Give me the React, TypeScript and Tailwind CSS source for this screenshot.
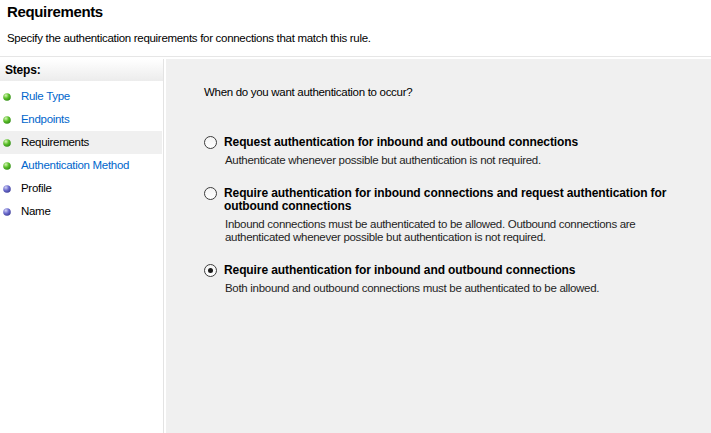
import React from 'react';

type Step = { label: string; done: boolean; link: boolean; current?: boolean };

const steps: Step[] = [
  { label: 'Rule Type', done: true, link: true },
  { label: 'Endpoints', done: true, link: true },
  { label: 'Requirements', done: true, link: false, current: true },
  { label: 'Authentication Method', done: true, link: true },
  { label: 'Profile', done: false, link: false },
  { label: 'Name', done: false, link: false },
];

const options = [
  {
    title: 'Request authentication for inbound and outbound connections',
    desc: 'Authenticate whenever possible but authentication is not required.',
    checked: false,
  },
  {
    title: 'Require authentication for inbound connections and request authentication for outbound connections',
    desc: 'Inbound connections must be authenticated to be allowed. Outbound connections are authenticated whenever possible but authentication is not required.',
    checked: false,
  },
  {
    title: 'Require authentication for inbound and outbound connections',
    desc: 'Both inbound and outbound connections must be authenticated to be allowed.',
    checked: true,
  },
];

const Dot = ({ done }: { done: boolean }) => {
  const id = done ? 'g-done' : 'g-todo';
  return (
    <svg width="8" height="8" viewBox="0 0 8 8" className="shrink-0">
      <defs>
        <radialGradient id={id} cx="0.35" cy="0.3" r="0.75">
          <stop offset="0" stopColor={done ? '#d8f5b8' : '#d4d4f4'} />
          <stop offset="0.5" stopColor={done ? '#5cc02a' : '#6f6fd0'} />
          <stop offset="1" stopColor={done ? '#2f8a14' : '#3c3c96'} />
        </radialGradient>
      </defs>
      <circle cx="4" cy="4" r="3.8" fill={`url(#${id})`} />
    </svg>
  );
};

const Radio = ({ checked }: { checked: boolean }) => (
  <span className="flex h-[13px] w-[13px] shrink-0 items-center justify-center rounded-full border border-[#3c3c3c] bg-gradient-to-b from-[#f4f4f4] to-white">
    {checked && <span className="h-[5px] w-[5px] rounded-full bg-[#1a1a1a]" />}
  </span>
);

const App: React.FC = () => {
  return (
    <div
      className="flex h-[433px] w-[711px] flex-col overflow-hidden bg-white text-[11.5px] tracking-[-0.3px] text-black"
      style={{ fontFamily: '"Liberation Sans", Arial, sans-serif' }}
    >
      <div className="h-[56px] px-[7px] pt-[3px]">
        <div className="text-[15px] font-bold leading-[18px] tracking-[-0.35px]">Requirements</div>
        <div className="mt-[10px] leading-[15px]">
          Specify the authentication requirements for connections that match this rule.
        </div>
      </div>
      <div className="h-px bg-[#e6e6e6]" />
      <div className="flex flex-1 pt-[2px]">
        <div className="w-[164px] border-r border-[#e3e3e3]">
          <div className="flex h-[22px] items-center bg-gradient-to-b from-white to-[#ececec] pl-[5px] text-[12px] font-bold tracking-[-0.2px]">
            Steps:
          </div>
          <div className="flex flex-col pt-[4px]">
            {steps.map((s) => (
              <div
                key={s.label}
                className={`flex h-[23px] items-center gap-[10px] pl-[3px] ${s.current ? 'mr-[1px] bg-[#f0f0f0]' : ''}`}
              >
                <Dot done={s.done} />
                <span className={s.link ? 'text-[#0066cc]' : 'text-black'}>{s.label}</span>
              </div>
            ))}
          </div>
        </div>
        <div className="ml-[2px] flex-1 bg-[#f0f0f0] pl-[38px] pr-[40px] pt-[26px]">
          <div className="leading-[15px]">When do you want authentication to occur?</div>
          <div className="mt-[36px] flex flex-col gap-[20px]">
            {options.map((o) => (
              <div key={o.title} className="flex gap-[7px]">
                <Radio checked={o.checked} />
                <div className="flex flex-col">
                  <div className="text-[12px] font-bold leading-[13px] tracking-[-0.1px]">{o.title}</div>
                  <div className="mt-[5px] pl-[1px] leading-[13px] text-[#1e1e1e]">{o.desc}</div>
                </div>
              </div>
            ))}
          </div>
        </div>
      </div>
    </div>
  );
};

export default App;
